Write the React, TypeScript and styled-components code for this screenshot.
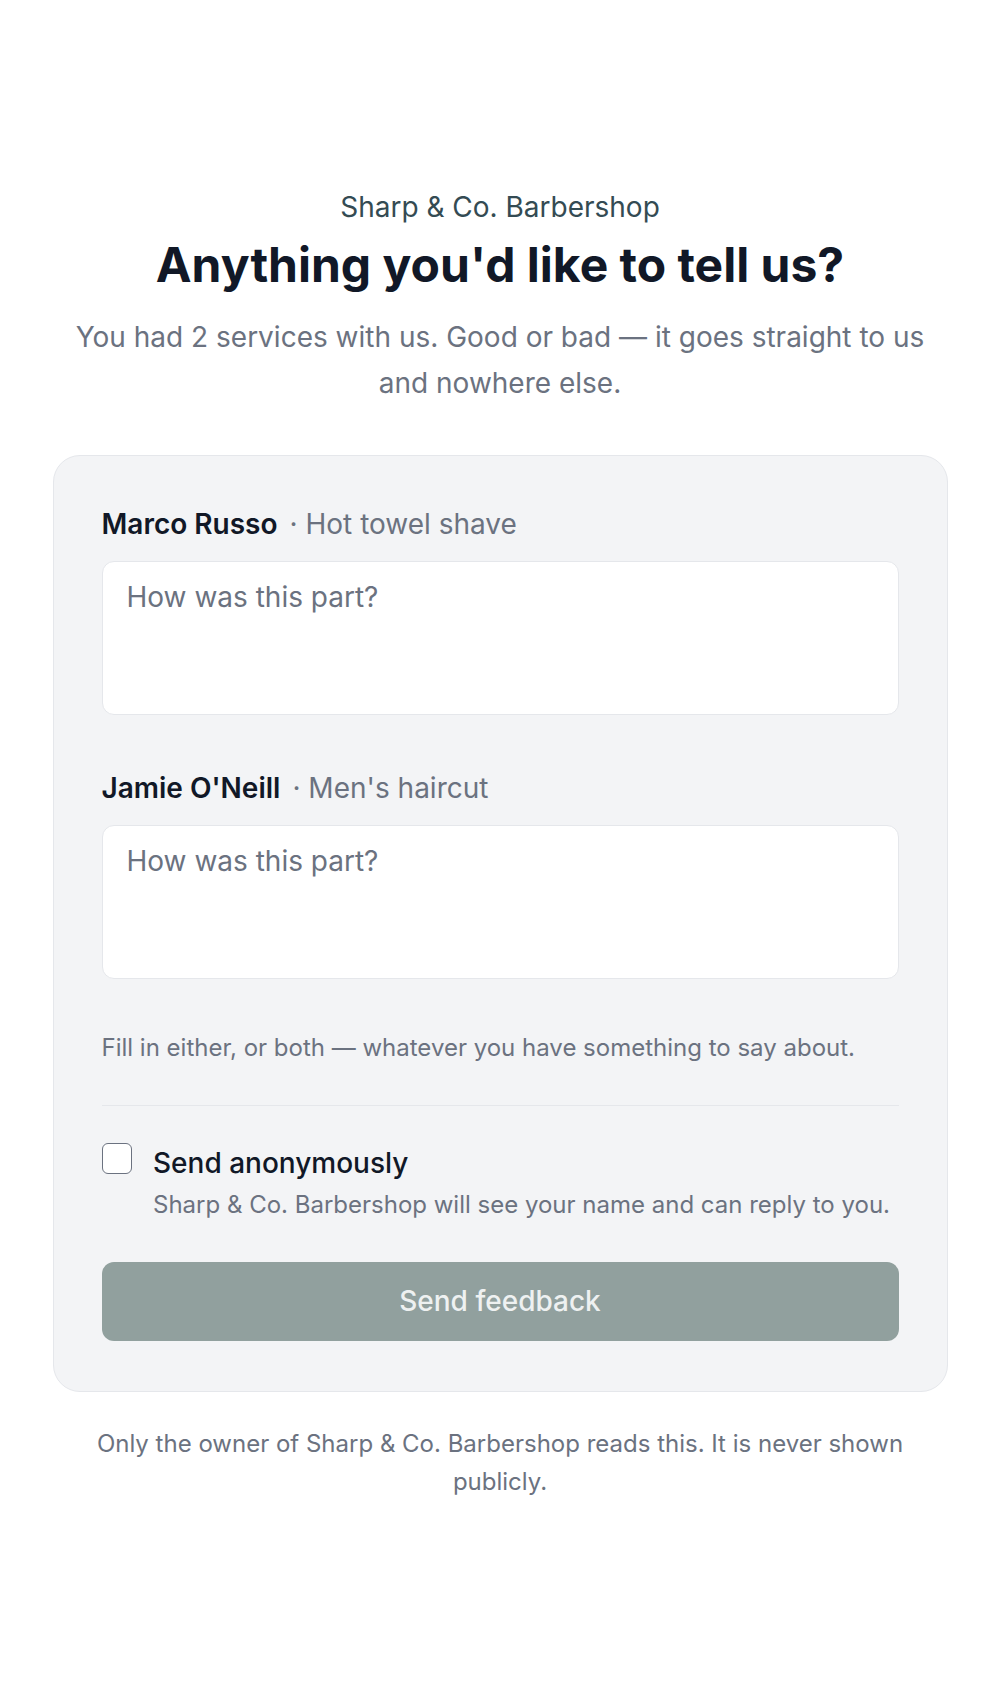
import styled, { createGlobalStyle } from "styled-components";

const GlobalStyle = createGlobalStyle`
    html, body {
        margin: 0;
        padding: 0;
        background: #ffffff;
        font-family: Inter, "Noto Sans", "Liberation Sans", sans-serif;
    }
    * {
        box-sizing: border-box;
    }
`;

const Page = styled.main`
    min-height: 100vh;
    display: flex;
    flex-direction: column;
    align-items: center;
    justify-content: center;
    padding: 48px 52px;
`;

const Column = styled.div`
    width: 100%;
    max-width: 895px;
    display: flex;
    flex-direction: column;
`;

const Header = styled.header`
    text-align: center;
`;

const Brand = styled.p`
    margin: 0;
    font-size: 28px;
    line-height: 40.5px;
    color: #344b53;
`;

const Title = styled.h1`
    margin: 8px 0 0;
    font-size: 48px;
    line-height: 60px;
    font-weight: 700;
    color: #111827;
`;

const Lead = styled.p`
    margin: 19px 0 0;
    font-size: 28px;
    line-height: 46px;
    color: #6b7280;
`;

const Card = styled.form`
    margin-top: 49px;
    background: #f3f4f6;
    border: 1.5px solid #e5e7eb;
    border-radius: 27px;
    padding: 48px 48px 49.5px;
    display: flex;
    flex-direction: column;
`;

const Part = styled.div`
    & + & {
        margin-top: 53.5px;
    }
`;

const PartLabel = styled.label`
    display: flex;
    align-items: baseline;
    font-size: 28px;
    line-height: 40.5px;
    margin-bottom: 16px;
`;

const Staff = styled.span`
    font-weight: 600;
    color: #111827;
`;

const Service = styled.span`
    margin-left: 12px;
    color: #6b7280;
`;

const Answer = styled.textarea`
    display: block;
    width: 100%;
    height: 154px;
    padding: 15px 24px;
    font-family: inherit;
    font-size: 28px;
    line-height: 40.5px;
    color: #111827;
    background: #ffffff;
    border: 1.5px solid #e5e7eb;
    border-radius: 12px;
    resize: none;
    outline: none;
    &::placeholder {
        color: #6b7280;
    }
`;

const Hint = styled.p`
    margin: 51px 0 0;
    font-size: 24px;
    line-height: 36px;
    color: #6b7280;
`;

const Options = styled.div`
    margin-top: 39px;
    padding-top: 37.5px;
    border-top: 1.5px solid #e5e7eb;
`;

const AnonRow = styled.label`
    display: flex;
    align-items: flex-start;
    gap: 21px;
`;

const Check = styled.input`
    appearance: none;
    flex-shrink: 0;
    width: 30.5px;
    height: 30.5px;
    margin: 0;
    background: #ffffff;
    border: 1.5px solid #6b7280;
    border-radius: 6px;
`;

const AnonText = styled.div`
    display: flex;
    flex-direction: column;
`;

const AnonTitle = styled.span`
    font-size: 28px;
    line-height: 40.5px;
    font-weight: 500;
    color: #111827;
`;

const AnonDesc = styled.span`
    margin-top: 3px;
    font-size: 24px;
    line-height: 36px;
    color: #6b7280;
`;

const Submit = styled.button`
    margin-top: 39px;
    width: 100%;
    padding: 19.5px 24px;
    font-family: inherit;
    font-size: 28px;
    line-height: 40.5px;
    font-weight: 500;
    color: #eef1f1;
    background: #91a09e;
    border: none;
    border-radius: 12px;
`;

const Note = styled.p`
    margin: 33px 0 0;
    text-align: center;
    font-size: 24px;
    line-height: 38.3px;
    color: #6b7280;
`;

const parts = [
    { staff: "Marco Russo", service: "Hot towel shave" },
    { staff: "Jamie O'Neill", service: "Men's haircut" },
];

const App = () => {
    return (
        <>
            <GlobalStyle />
            <Page>
                <Column>
                    <Header>
                        <Brand>Sharp &amp; Co. Barbershop</Brand>
                        <Title>Anything you'd like to tell us?</Title>
                        <Lead>You had 2 services with us. Good or bad — it goes straight to us and nowhere else.</Lead>
                    </Header>
                    <Card onSubmit={e => e.preventDefault()}>
                        {parts.map(p => (
                            <Part key={p.staff}>
                                <PartLabel>
                                    <Staff>{p.staff}</Staff>
                                    <Service>· {p.service}</Service>
                                </PartLabel>
                                <Answer rows={3} placeholder="How was this part?" />
                            </Part>
                        ))}
                        <Hint>Fill in either, or both — whatever you have something to say about.</Hint>
                        <Options>
                            <AnonRow>
                                <Check type="checkbox" />
                                <AnonText>
                                    <AnonTitle>Send anonymously</AnonTitle>
                                    <AnonDesc>Sharp &amp; Co. Barbershop will see your name and can reply to you.</AnonDesc>
                                </AnonText>
                            </AnonRow>
                        </Options>
                        <Submit type="submit" disabled>Send feedback</Submit>
                    </Card>
                    <Note>Only the owner of Sharp &amp; Co. Barbershop reads this. It is never shown publicly.</Note>
                </Column>
            </Page>
        </>
    );
};

export default App;
